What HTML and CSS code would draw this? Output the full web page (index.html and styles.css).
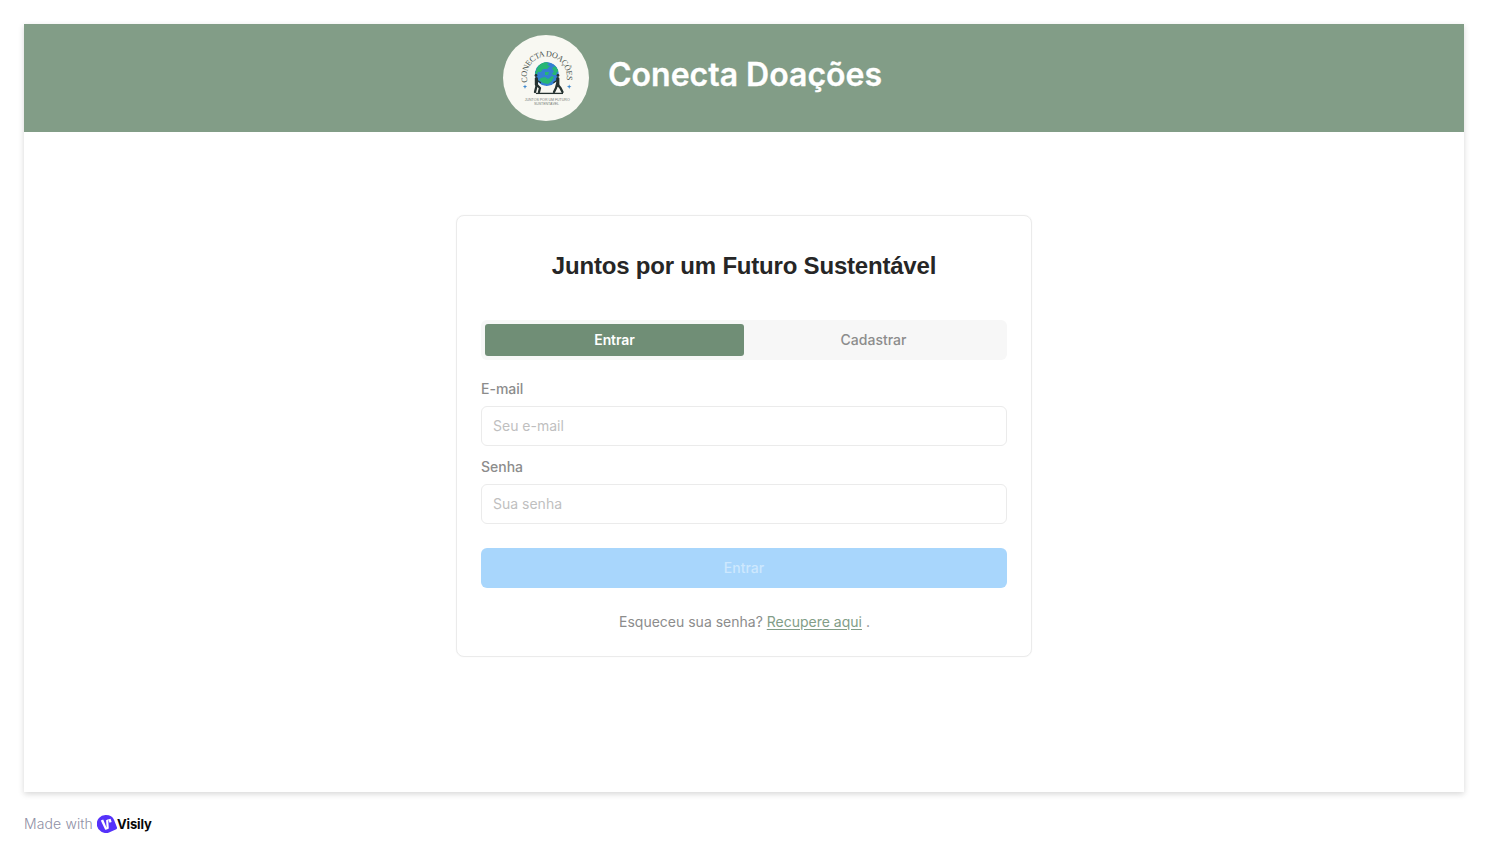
FILE: index.html
```html
<!DOCTYPE html>
<html lang="pt-BR">
<head>
<meta charset="utf-8">
<title>Conecta Doações</title>
<link rel="stylesheet" href="styles.css">
</head>
<body>
<main class="page">
  <header class="banner">
    <svg class="logo" viewBox="0 0 86 86" role="img" aria-label="Conecta Doações">
      <defs>
        <path id="arc" d="M24.600 47A20 20 0 1 1 63 47"/>
        <clipPath id="globe"><circle cx="43.8" cy="39" r="12"/></clipPath>
      </defs>
      <circle cx="43" cy="43" r="43" fill="#f8f8f2"/>
      <text class="logo-arc"><textPath href="#arc" textLength="72" lengthAdjust="spacing">CONECTA DOAÇÕES</textPath></text>
      <g clip-path="url(#globe)">
        <circle cx="43.8" cy="39" r="12" fill="#347fd2"/>
        <path d="M34 33q3-5 8-6l4 1-2 2 3 1-3 3-4 0-2 3-3 0-1 3-2-2zM49 33l3-2 4 5-2 1-1 3-3 0-1-2 2-1zM38 43l4-1 3 2 4-3 2 1-2 4-4 3-5-1-4-3zM42 37l4 0-1 3-3 0z" fill="#26b673"/>
      </g>
      <g fill="none" stroke="#253230" stroke-width="2.3" stroke-linecap="round" stroke-linejoin="round">
        <path d="M33.4 43.500v6" stroke-width="3.200"/>
        <path d="M34 49l-1 4-1 4M34 50l3 3-1 4"/>
        <path d="M54.800 43.500v6" stroke-width="3.200"/>
        <path d="M54 49l-1 4-2 4M55 50l2.500 3 2 4"/>
        <path d="M33.500 45l4 2.500M54.800 45l-4 2.500" stroke-width="1.300"/>
      </g>
      <circle cx="33" cy="40.4" r="1.4" fill="#253230"/><circle cx="55" cy="40.4" r="1.4" fill="#253230"/>
      <path d="M33 58.4h27" stroke="#253230" stroke-width="1.3"/>
      <path d="M22 49.4l.6 1.7 1.7.6-1.7.6-.6 1.7-.6-1.7-1.7-.6 1.7-.6zM66.2 49.4l.6 1.7 1.7.6-1.7.6-.6 1.7-.6-1.7-1.7-.6 1.7-.6z" fill="#3d88cf"/>
      <text class="logo-small" x="21.7" y="66.3" textLength="45" lengthAdjust="spacing">JUNTOS POR UM FUTURO</text>
      <text class="logo-small" x="31" y="70.3" textLength="25" lengthAdjust="spacing">SUSTENTÁVEL</text>
    </svg>
    <h1 class="brand">Conecta Doações</h1>
  </header>
  <section class="card">
    <h2 class="title">Juntos por um Futuro Sustentável</h2>
    <div class="tabs">
      <button class="tab tab-active">Entrar</button>
      <button class="tab">Cadastrar</button>
    </div>
    <label class="label" for="email">E-mail</label>
    <input class="field" id="email" type="email" placeholder="Seu e-mail">
    <label class="label" for="senha">Senha</label>
    <input class="field" id="senha" type="password" placeholder="Sua senha">
    <button class="submit" disabled>Entrar</button>
    <p class="recover">Esqueceu sua senha? <a class="link" href="#">Recupere aqui</a> .</p>
  </section>
</main>
<footer class="footer">
  <span class="made">Made with</span>
  <svg class="mark" viewBox="0 0 20 18" aria-hidden="true">
    <path d="M9 0c4 0 6.8 1.700 8.100 5L20 12.500q.4 1.200-.7 1.700L12 17.400A9 9 0 1 1 9 0Z" fill="#5532fa"/>
    <path d="M3.800 5.600l2.400-1 3.400 8.200-.5-7.600 2.100-.9.600 9.200-2 .9-1.600.3z" fill="#fff"/>
    <path d="M11 4.600l2.600-.8 1 3.100-2 .8z" fill="#fff"/>
  </svg>
  <span class="visily">Visily</span>
</footer>
</body>
</html>
```
FILE: styles.css
```css
* { box-sizing: border-box; }
body { margin: 0; padding: 24px; background: #fff; font-family: Inter, sans-serif; }
button, input { font-family: inherit; }
.page { height: 768px; background: #fff; box-shadow: 0 2px 6px rgba(0, 0, 0, .16); }
.banner { display: flex; height: 108px; padding: 11px 0 0 479px; background: #829d87; }
.logo { width: 86px; height: 86px; flex: none; }
.logo-arc { font: 8.2px "Liberation Serif", serif; fill: #46504a; }
.logo-small { font: 3.6px "Liberation Sans", sans-serif; fill: #777d77; }
.brand { margin: 18px 0 0 19px; font-size: 32px; line-height: 44px; font-weight: 600; -webkit-text-stroke: .3px #fff; color: #fff; white-space: nowrap; }
.card { display: flex; flex-direction: column; width: 576px; height: 442px; margin: 83px auto 0; padding: 32px 24px 0; border: 1px solid #ebebeb; border-radius: 8px; box-shadow: 0 0 1px rgba(0, 0, 0, .1); }
.title { margin: 0; font: bold 24px/36px "Liberation Sans", Arial, sans-serif; letter-spacing: -.2px; color: #262626; text-align: center; white-space: nowrap; }
.tabs { display: flex; height: 40px; margin-top: 36px; padding: 4px; border-radius: 6px; background: #f7f7f7; }
.tab { flex: 1; padding: 0 0 2px; border: 0; border-radius: 3px; background: transparent; color: #8c8c8c; font-size: 14px; font-weight: 500; }
.tab-active { background: #708e76; color: #fff; font-weight: 600; letter-spacing: -.1px; }
.label { margin-top: 18px; font-size: 14px; line-height: 22px; font-weight: 500; color: #8c8c8c; }
.field { height: 40px; margin-top: 6px; padding: 0 11px 2px; border: 1px solid #ebebeb; border-radius: 6px; background: #fff; font-size: 14px; outline: none; }
.field + .label { margin-top: 10px; }
.field::placeholder { color: #bfbfbf; opacity: 1; }
.submit { height: 40px; margin-top: 24px; padding: 0 0 2px; border: 0; border-radius: 6px; background: #a8d6fc; color: #cde8fe; font-size: 14px; font-weight: 500; }
.recover { margin: 23px 0 0; padding-left: 1px; font-size: 14px; line-height: 22px; color: #8c8c8c; text-align: center; }
.link { color: #829d87; text-decoration: underline; text-underline-offset: 2px; }
.footer { display: flex; align-items: center; height: 20px; margin-top: 22px; }
.made { width: 73px; padding-bottom: 2px; font-size: 14px; font-weight: 300; letter-spacing: .12px; color: #8f90a5; white-space: nowrap; }
.mark { width: 20px; height: 18px; flex: none; }
.visily { font-size: 13px; font-weight: 700; letter-spacing: -.15px; color: #080808; }
```
